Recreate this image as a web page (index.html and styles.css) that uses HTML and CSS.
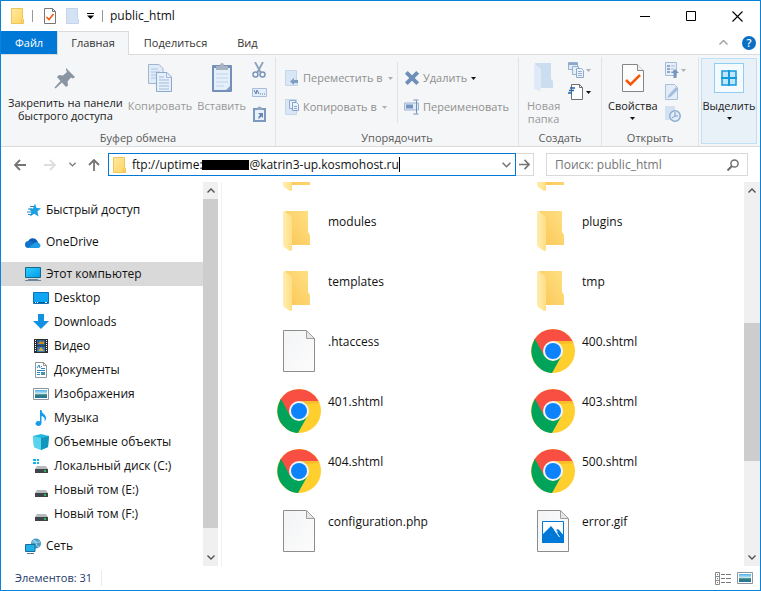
FILE: index.html
```html
<!DOCTYPE html>
<html lang="ru">
<head>
<meta charset="utf-8">
<title>public_html</title>
<link rel="stylesheet" href="styles.css">
</head>
<body>
<svg class="sprite" aria-hidden="true">
  <defs>
    <linearGradient id="gFront" x1="0" y1="0" x2="1" y2="0"><stop offset="0" stop-color="#ffedae"/><stop offset="1" stop-color="#ffdf86"/></linearGradient>
    <linearGradient id="gBack" x1="0" y1="1" x2="1" y2="0"><stop offset="0" stop-color="#fbc657"/><stop offset="1" stop-color="#ffe083"/></linearGradient>
    <linearGradient id="gSmall" x1="0" y1="0" x2="1" y2="1"><stop offset="0" stop-color="#ffe9a3"/><stop offset="1" stop-color="#ffd35f"/></linearGradient>
    <linearGradient id="gScreen" x1="0" y1="0" x2="1" y2="1"><stop offset="0" stop-color="#2fd0ff"/><stop offset="1" stop-color="#009bea"/></linearGradient>
    <linearGradient id="gPage" x1="0" y1="0" x2="1" y2="1"><stop offset="0" stop-color="#f3f4f5"/><stop offset="1" stop-color="#fcfcfd"/></linearGradient>
    <linearGradient id="gPic" x1="0" y1="0" x2="0" y2="1"><stop offset="0" stop-color="#4fb0e8"/><stop offset=".45" stop-color="#c5e7f4"/><stop offset=".6" stop-color="#39806f"/><stop offset="1" stop-color="#2073ab"/></linearGradient>
  </defs>
  <symbol id="folder" viewBox="0 0 28 40"><path d="M2 0h23v21l2 3v10H6z" fill="url(#gBack)"/><path d="M0 0l7 4q2 1 2 4v31q0 1-2 1l-6-4q-1-1-1-3z" fill="url(#gFront)"/></symbol>
  <symbol id="folder-sm" viewBox="0 0 13 16"><path d="M.5.5h11v10l1 1v4H.5z" fill="url(#gSmall)" stroke="#efc556"/><path d="M10.500 15v-3.500l1-1" fill="none" stroke="#efc556"/></symbol>
  <symbol id="page" viewBox="0 0 32 42"><path d="M.5.5H23L31.500 9v32.500H.5z" fill="url(#gPage)" stroke="#8d8d8d"/><path d="M23.500.5v8h8z" fill="#e6e6e6" stroke="#a0a0a0"/></symbol>
  <symbol id="gif" viewBox="0 0 32 42"><path d="M.5.5H23L31.500 9v32.500H.5z" fill="url(#gPage)" stroke="#8d8d8d"/><path d="M23.500.5v8h8z" fill="#e6e6e6" stroke="#a0a0a0"/><path d="M5.500 11.500h21v21h-21z" fill="#fff" stroke="#0078d7"/><path d="M5 33v-8l9-9 6 7 2-3 5 6v7z" fill="#0078d7"/><path d="M19 20l2-1 5 6v2z" fill="#0078d7"/><path d="M17.500 20l5 7" stroke="#fff"/></symbol>
  <symbol id="chrome" viewBox="0 0 44 44"><circle cx="22" cy="22" r="22" fill="#ffcf2e"/><path d="M3 11A22 22 0 0 1 41.500 12H22L13.300 27z" fill="#f94f43"/><path d="M4 10A22 22 0 0 0 21 44l9.500-17L22 32l-8.700-5z" fill="#00a35a"/><path d="M22 12h19.500l.8 2-14 1z" fill="#f0a922" opacity=".5"/><circle cx="22" cy="22" r="10" fill="#f2f4f6"/><circle cx="22" cy="22" r="8" fill="#0c82fb"/></symbol>
  <symbol id="tick-page" viewBox="0 0 22 28"><path d="M.5.500H15L21.500 7v20.500H.5z" fill="#fcfcfc" stroke="#858585"/><path d="M15.500.5v6h6" fill="#eee" stroke="#858585"/><path d="M4 16l4.500 4.500L18 11" fill="none" stroke="#f4590c" stroke-width="2.500"/></symbol>
  <symbol id="tick-sm" viewBox="0 0 12 16"><path d="M.5.5h8l3 3v12H.5z" fill="#fff" stroke="#777"/><path d="M8.500.5v3h3" fill="none" stroke="#777"/><path d="M2.500 9l2.500 2.500L9.500 6" fill="none" stroke="#f4590c" stroke-width="1.600"/></symbol>
  <symbol id="ghost-sm" viewBox="0 0 13 16"><path d="M.5.5h11v10l1 1v4H.5z" fill="#d4e2f3" stroke="#c3d5ea"/></symbol>
  <symbol id="arr" viewBox="0 0 5 3"><path d="M0 0h5L2.500 3z" fill="currentColor"/></symbol>
  <symbol id="pin" viewBox="0 0 22 22"><path d="M12 1l9 9-2 1.500-2-1-3.500 4 .5 4-2 1.500-4-4.500-6.500 6L.500 20.500l6-6.500L3 10l2-2 4 .5L13 5l-1-2z" fill="#8995a1"/></symbol>
  <symbol id="copy" viewBox="0 0 24 28"><path d="M.5.500H11l4 4v15H.500z" fill="#e1ecf9" stroke="#9eb4d3"/><path d="M3 5h7M3 8h9M3 11h6M3 14h6" stroke="#b0c4e0"/><path d="M8.500 8.500H19l4.500 4.500v14.500h-15z" fill="#e6f0fb" stroke="#8da8cd"/><path d="M18.500 8.500v5h5M11 16h10M11 19h10M11 22h10M11 25h10M11 13h5" stroke="#a3bbda" fill="none"/></symbol>
  <symbol id="paste" viewBox="0 0 20 29"><rect y="2" width="20" height="27" rx="1" fill="#7390b8"/><path d="M2 5h16v22H2z" fill="#e4effb"/><path d="M4 11h12M4 15h12M4 19h12M4 23h8" stroke="#c3d4e8"/><path d="M4 3h4q0-3 2-3t2 3h4v4H4z" fill="#a8b3c2"/><path d="M14 27l4-4v4z" fill="#88a3c7"/></symbol>
  <symbol id="cut" viewBox="0 0 14 16"><path d="M3 0l6 11M11 0L5 11" stroke="#8ba0bc" stroke-width="1.800"/><circle cx="3.500" cy="12.500" r="2.500" fill="none" stroke="#7795bd" stroke-width="1.500"/><circle cx="10.500" cy="12.500" r="2.500" fill="none" stroke="#7795bd" stroke-width="1.500"/></symbol>
  <symbol id="path" viewBox="0 0 15 9"><path d="M.5.5h14v8H.5z" fill="#e5effb" stroke="#a8bdd9"/><path d="M2 2l2 4 1-4 2 4" stroke="#5f7fa9" fill="none"/><path d="M8 6h1m1 0h1m1 0h1" stroke="#5f7fa9"/></symbol>
  <symbol id="shortcut" viewBox="0 0 13 16"><path d="M1 3h11v12H1z" fill="#e7f0fb" stroke="#7d98bf" stroke-width="2"/><path d="M4 2q2.500-3 5 0v2H4z" fill="#96a6bc"/><path d="M5 7h5v5L8.500 10.500 5.500 13Q4.500 11 7 9z" fill="#6685b2"/></symbol>
  <symbol id="move" viewBox="0 0 14 16"><path d="M.5.5h11v10h1v5H.500z" fill="#d8e6f6" stroke="#c6d6e9"/><path d="M5 11.500l4-3.500v2h4v3H9v2z" fill="#7f9cc3"/></symbol>
  <symbol id="copyto" viewBox="0 0 14 16"><path d="M.5.5h11v15H.500z" fill="#d8e6f6" stroke="#c6d6e9"/><path d="M4.500 1.500h6v8h-6z" fill="#e9f2fc" stroke="#92acce"/><path d="M7.500 3.500h4l2 2v6h-6z" fill="#edf4fc" stroke="#86a2c8"/><path d="M9 7.500h3M9 9.500h3" stroke="#86a2c8"/></symbol>
  <symbol id="delete" viewBox="0 0 14 14"><path d="M2 2l10 10M12 2L2 12" stroke="#6f8fb9" stroke-width="3.400"/></symbol>
  <symbol id="rename" viewBox="0 0 16 15"><path d="M.5 3.500h14v7H.5z" fill="#dfebf9" stroke="#9db4d3"/><path d="M2 5h7v4H2z" fill="#7493bd"/><path d="M9.500.5h5m-5 14h5M12.500 1v13" stroke="#7290b9" fill="none"/></symbol>
  <symbol id="newfolder" viewBox="0 0 20 29"><path d="M1 0h16v16l2 2v7H4z" fill="#ccddef"/><path d="M0 1l5 3q2 1 2 3v20l-1 1-6-2z" fill="#deeaf7"/></symbol>
  <symbol id="newitem" viewBox="0 0 16 16"><path d="M.5.500h9v7h-9z" fill="#e0ecf8" stroke="#98b0cf"/><path d="M.5 2h9" stroke="#8da7ca" stroke-width="2"/><path d="M4.500 4.500h6v8h-6z" fill="#e4effb" stroke="#98b0cf"/><path d="M8.500 6.500h5l2 2v7h-7z" fill="#ebf3fc" stroke="#8fa9cb"/><path d="M10 9.500h4M10 11.500h4M10 13.500h4" stroke="#98b0cf"/></symbol>
  <symbol id="easy" viewBox="0 0 16 16"><path d="M3.500.5h8l3 3v12h-11z" fill="#fff" stroke="#707070"/><path d="M11.500.500v3h3" fill="none" stroke="#707070"/><path d="M2 4h5M1 6.500h5M0 9h4" stroke="#2362b0" stroke-width="1.300"/></symbol>
  <symbol id="open" viewBox="0 0 14 16"><path d="M.5.500h11v13H.500z" fill="#e7f0fa" stroke="#a7bbd6"/><path d="M2 3h3v2H2zm0 3h3v2H2zm0 3h3v2H2z" fill="#91aacb"/><path d="M6 4h4M6 7h3M6 10h1" stroke="#a7bbd6"/><path d="M10 7l4 4h-2.500v5h-3v-5H6z" fill="#7896bf"/></symbol>
  <symbol id="edit" viewBox="0 0 14 16"><path d="M.5.500h9l3 3v12H.5z" fill="#e2edf9" stroke="#a9bfdb"/><path d="M2.500 14l1-3L11 3l2.500 2L6 12.500z" fill="#a4bddb"/></symbol>
  <symbol id="history" viewBox="0 0 16 16"><path d="M0 0h10v14H0z" fill="#d3e1f2"/><circle cx="10" cy="10" r="5.200" fill="#e4eefa" stroke="#8fabd0" stroke-width="1.500"/><path d="M10 6v4L7 12m3-2h3" stroke="#7b9ac4" fill="none"/></symbol>
  <symbol id="tiles" viewBox="0 0 16 16"><path d="M1 1h14v14H1z" fill="#c0e6fb" stroke="#129add" stroke-width="1.500"/><path d="M8 0v16M0 8h16" stroke="#129add" stroke-width="2"/></symbol>
  <symbol id="left" viewBox="0 0 12 12"><path d="M12 6H1.500M6 1L1 6l5 5" fill="none" stroke="currentColor" stroke-width="1.800"/></symbol>
  <symbol id="chev" viewBox="0 0 8 5"><path d="M.5.500L4 4 7.500.5" fill="none" stroke="currentColor" stroke-width="1.400"/></symbol>
  <symbol id="search" viewBox="0 0 12 12"><circle cx="7.500" cy="4.500" r="3.600" fill="none" stroke="#6e6e6e" stroke-width="1.500"/><path d="M5 7L.5 11.500" stroke="#6e6e6e" stroke-width="2"/></symbol>
  <symbol id="star" viewBox="0 0 16 16"><path d="M10 1.500l1.500 4.500 4.500.2-3.600 3.200 1.200 5.100-4.400-2.700-4.200 2.700 1.500-4.800-2.500-3 4-.2z" fill="#1b9ee2"/><path d="M5 4.500h4M3 7h4M2 10h5M3 12.500h3" stroke="#2a8cc4"/></symbol>
  <symbol id="cloud" viewBox="0 0 16 16"><path d="M3 8a5 5 0 0 1 9-1.500L14 10 3 11z" fill="#0a5eb5"/><path d="M3.500 14a3.500 3.500 0 0 1 0-7c2-.3 3.500.8 5 2L13 14z" fill="#1272c8"/><path d="M3 14L10 8.500a3.300 3.300 0 0 1 3.700.8A2.400 2.400 0 0 1 13.500 14z" fill="#1f9be6"/></symbol>
  <symbol id="pc" viewBox="0 0 16 16"><path d="M.5 1.500h15v10H.5z" fill="url(#gScreen)" stroke="#16688d"/><path d="M0 14.500h16M3 13.500h10" stroke="#6d8597"/></symbol>
  <symbol id="desktop" viewBox="0 0 16 16"><path d="M.5 2.500h15v11H.500z" fill="#0fa5f5" stroke="#0873b8"/><path d="M1 12.500h14" stroke="#075b9c"/><path d="M2 12.500h1m1 0h1m7 0h2" stroke="#fff"/></symbol>
  <symbol id="down" viewBox="0 0 16 16"><path d="M5 0h6v7h5l-8 8-8-8h5z" fill="#1191e2"/></symbol>
  <symbol id="video" viewBox="0 0 16 16"><path d="M1 1h14v14H1z" fill="#2d2d2d"/><path d="M2.500 2v12M13.500 2v12" stroke="#fff" stroke-dasharray="1 1"/><path d="M4 2h8v5.500H4z" fill="#27629f"/><path d="M4 8.500h8V14H4z" fill="#3579b9"/><path d="M5 6l2-3 2 1 2-1v3z" fill="#c78d2c"/><path d="M5 13l3-4 3 4z" fill="#d5ac41"/></symbol>
  <symbol id="docs" viewBox="0 0 16 16"><path d="M2.500.5h8l3 3v12h-11z" fill="#fff" stroke="#8c969b"/><path d="M10.500.5v3h3" fill="none" stroke="#8c969b"/><path d="M4 6l2-3 1 3M4 8.500h8M4 10.500h3M4 12.500h3M8 4.500h1M8 6.500h4" stroke="#2888bf" fill="none"/><path d="M8 10h4v3H8z" fill="#4a91a9"/></symbol>
  <symbol id="pics" viewBox="0 0 16 16"><path d="M.5 2.500h15v11H.5z" fill="#fff" stroke="#8c969b"/><path d="M2 4h12v8H2z" fill="url(#gPic)"/></symbol>
  <symbol id="music" viewBox="0 0 16 16"><path d="M7 0h1.500c0 4 5 4 4.500 9-.3 1-1 2-1.500 2 1-4-2-4.500-3-5v7c0 4-6 3.500-6 .5 0-2 2.500-3 4.500-2z" fill="#159beb"/></symbol>
  <symbol id="cube" viewBox="0 0 16 16"><path d="M0 2l8-2 8 2-1 11-7 3-7-3z" fill="#26b7dc"/><path d="M0 2l8 2v12l-7-3z" fill="#58d4ec"/><path d="M8 4l8-2-1 11-7 3z" fill="#1396bd"/></symbol>
  <symbol id="disk" viewBox="0 0 16 16"><path d="M4 8h9l2 3H2z" fill="#b7babb"/><path d="M2 11h13v4H2z" fill="#404448"/><path d="M11 13h2" stroke="#1bde62" stroke-width="1.500"/></symbol>
  <symbol id="disk-c" viewBox="0 0 16 16"><path d="M0 1h3v2H0zm4 0h2v2H4zM0 4h3v2H0zm4 0h2v2H4z" fill="#10b5ea"/><path d="M4 8h9l2 3H2z" fill="#b7babb"/><path d="M2 11h13v4H2z" fill="#404448"/><path d="M11 13h2" stroke="#1bde62" stroke-width="1.500"/></symbol>
  <symbol id="net" viewBox="0 0 16 16"><circle cx="11" cy="5.500" r="5" fill="#4b9cc5"/><path d="M8 2q3 0 3 3t3 4M7 4h8" stroke="#a8ddef" fill="none"/><path d="M.5 6.500h9.500v7H.500z" fill="#20b1e8" stroke="#176f9b"/><path d="M2 15.500h7" stroke="#5e7688"/></symbol>
  <symbol id="details" viewBox="0 0 16 13"><path d="M.5.500h4v12h-4zM0 4.500h5M0 8.500h5" stroke="#8a8a8a" fill="#fff"/><path d="M2 2.500h1M2 6.500h1" stroke="#3888c0"/><path d="M2 10.500h1" stroke="#d44"/><path d="M6 2.500h4m1 0h5M6 6.500h4m1 0h5M6 10.500h4m1 0h5" stroke="#777"/></symbol>
</svg>

<div class="window">
  <header class="titlebar">
    <svg class="i13"><use href="#folder-sm"/></svg>
    <span class="bar"></span>
    <button class="plain" aria-label="Свойства"><svg class="i12"><use href="#tick-sm"/></svg></button>
    <button class="plain" aria-label="Новая папка"><svg class="i13"><use href="#ghost-sm"/></svg></button>
    <button class="plain custom" aria-label="Настройка панели"><svg class="i7" viewBox="0 0 7 6"><path d="M0 .5h7" stroke="#000"/><path d="M0 2.500h7L3.500 6z"/></svg></button>
    <span class="bar"></span>
    <h1>public_html</h1>
    <div class="winctl">
      <button class="plain" aria-label="Свернуть"><svg viewBox="0 0 11 11"><path d="M0 5.500h10" stroke="#000"/></svg></button>
      <button class="plain" aria-label="Развернуть"><svg viewBox="0 0 11 11"><path d="M.5.500h9v9h-9z" fill="none" stroke="#000"/></svg></button>
      <button class="plain" aria-label="Закрыть"><svg viewBox="0 0 11 11"><path d="M.5.500l10 10M10.500.5l-10 10" stroke="#000" stroke-width="1.100"/></svg></button>
    </div>
  </header>

  <nav class="tabs">
    <button class="tab file">Файл</button>
    <button class="tab active">Главная</button>
    <button class="tab">Поделиться</button>
    <button class="tab">Вид</button>
    <div class="tabend">
      <button class="plain" aria-label="Свернуть ленту"><svg class="collapse" viewBox="0 0 9 5"><path d="M.5 4.500l4-4 4 4" fill="none" stroke="#a4a4a4" stroke-width="1.500"/></svg></button>
      <button class="help" aria-label="Справка">?</button>
    </div>
  </nav>

  <div class="ribbon">
    <section class="group clip">
      <div class="tools">
        <button class="big"><svg class="pin"><use href="#pin"/></svg><span>Закрепить на панели<br>быстрого доступа</span></button>
        <button class="big off"><svg class="i24"><use href="#copy"/></svg><span>Копировать</span></button>
        <button class="big off"><svg class="i20"><use href="#paste"/></svg><span>Вставить</span></button>
        <div class="stack">
          <button class="plain" aria-label="Вырезать"><svg class="i14"><use href="#cut"/></svg></button>
          <button class="plain" aria-label="Скопировать путь"><svg class="i15"><use href="#path"/></svg></button>
          <button class="plain" aria-label="Вставить ярлык"><svg class="i13"><use href="#shortcut"/></svg></button>
        </div>
      </div>
      <h2>Буфер обмена</h2>
    </section>
    <section class="group arrange">
      <div class="tools">
        <div class="pair">
          <button class="line"><svg class="i14"><use href="#move"/></svg>Переместить в<svg class="arr dim"><use href="#arr"/></svg></button>
          <button class="line"><svg class="i14"><use href="#copyto"/></svg>Копировать в<svg class="arr dim"><use href="#arr"/></svg></button>
        </div>
        <div class="pair second">
          <button class="line"><svg class="i16"><use href="#delete"/></svg>Удалить<svg class="arr"><use href="#arr"/></svg></button>
          <button class="line"><svg class="i16"><use href="#rename"/></svg>Переименовать</button>
        </div>
      </div>
      <h2>Упорядочить</h2>
    </section>
    <section class="group create">
      <div class="tools">
        <button class="big off"><svg class="i20"><use href="#newfolder"/></svg><span>Новая<br>папка</span></button>
        <div class="stack">
          <button class="plain" aria-label="Создать элемент"><svg class="i16"><use href="#newitem"/></svg><svg class="arr dim"><use href="#arr"/></svg></button>
          <button class="plain" aria-label="Простой доступ"><svg class="i16"><use href="#easy"/></svg><svg class="arr"><use href="#arr"/></svg></button>
        </div>
      </div>
      <h2>Создать</h2>
    </section>
    <section class="group opening">
      <div class="tools">
        <button class="big"><svg class="i22"><use href="#tick-page"/></svg><span>Свойства</span><svg class="arr"><use href="#arr"/></svg></button>
        <div class="stack">
          <button class="plain" aria-label="Открыть"><svg class="i14"><use href="#open"/></svg><svg class="arr dim"><use href="#arr"/></svg></button>
          <button class="plain" aria-label="Изменить"><svg class="i14"><use href="#edit"/></svg></button>
          <button class="plain" aria-label="Журнал"><svg class="i16"><use href="#history"/></svg></button>
        </div>
      </div>
      <h2>Открыть</h2>
    </section>
    <section class="group select">
      <button class="big chosen"><span class="frame"><svg class="i16"><use href="#tiles"/></svg></span><span>Выделить</span><svg class="arr"><use href="#arr"/></svg></button>
    </section>
  </div>

  <div class="location">
    <button class="plain back" aria-label="Назад"><svg><use href="#left"/></svg></button>
    <button class="plain fwd" aria-label="Вперед"><svg><use href="#left"/></svg></button>
    <button class="plain recent" aria-label="Последние расположения"><svg><use href="#chev"/></svg></button>
    <button class="plain up" aria-label="Вверх"><svg><use href="#left"/></svg></button>
    <div class="address">
      <svg class="i13"><use href="#folder-sm"/></svg>
      <div class="field">
        <input type="text" aria-label="Адрес" value="ftp://uptime:               @katrin3-up.kosmohost.ru">
        <span class="mask"></span><span class="caret"></span>
      </div>
      <button class="plain" aria-label="Список адресов"><svg class="drop"><use href="#chev"/></svg></button>
    </div>
    <button class="go" aria-label="Перейти"><svg><use href="#left"/></svg></button>
    <div class="search">
      <input type="search" aria-label="Поиск" placeholder="Поиск: public_html">
      <svg class="i12s"><use href="#search"/></svg>
    </div>
  </div>

  <main class="body">
    <nav class="tree">
      <ul>
        <li class="root"><a href="#"><svg><use href="#star"/></svg>Быстрый доступ</a></li>
        <li class="root"><a href="#"><svg><use href="#cloud"/></svg>OneDrive</a></li>
        <li class="root"><a href="#" class="current"><svg><use href="#pc"/></svg>Этот компьютер</a>
          <ul class="sub">
            <li><a href="#"><svg><use href="#desktop"/></svg>Desktop</a></li>
            <li><a href="#"><svg><use href="#down"/></svg>Downloads</a></li>
            <li><a href="#"><svg><use href="#video"/></svg>Видео</a></li>
            <li><a href="#"><svg><use href="#docs"/></svg>Документы</a></li>
            <li><a href="#"><svg><use href="#pics"/></svg>Изображения</a></li>
            <li><a href="#"><svg><use href="#music"/></svg>Музыка</a></li>
            <li><a href="#"><svg><use href="#cube"/></svg>Объемные объекты</a></li>
            <li><a href="#"><svg><use href="#disk-c"/></svg>Локальный диск (C:)</a></li>
            <li><a href="#"><svg><use href="#disk"/></svg>Новый том (E:)</a></li>
            <li><a href="#"><svg><use href="#disk"/></svg>Новый том (F:)</a></li>
          </ul>
        </li>
        <li class="root"><a href="#"><svg><use href="#net"/></svg>Сеть</a></li>
      </ul>
    </nav>
    <div class="scroll tree-scroll">
      <svg class="tip up"><use href="#chev"/></svg>
      <div class="track"><div class="thumb"></div></div>
      <svg class="tip"><use href="#chev"/></svg>
    </div>
    <div class="files">
      <div class="grid">
        <div class="item"><svg class="fold"><use href="#folder"/></svg></div>
        <div class="item"><svg class="fold"><use href="#folder"/></svg></div>
        <div class="item"><svg class="fold"><use href="#folder"/></svg><span>modules</span></div>
        <div class="item"><svg class="fold"><use href="#folder"/></svg><span>plugins</span></div>
        <div class="item"><svg class="fold"><use href="#folder"/></svg><span>templates</span></div>
        <div class="item"><svg class="fold"><use href="#folder"/></svg><span>tmp</span></div>
        <div class="item"><svg class="doc"><use href="#page"/></svg><span>.htaccess</span></div>
        <div class="item"><svg class="web"><use href="#chrome"/></svg><span>400.shtml</span></div>
        <div class="item"><svg class="web"><use href="#chrome"/></svg><span>401.shtml</span></div>
        <div class="item"><svg class="web"><use href="#chrome"/></svg><span>403.shtml</span></div>
        <div class="item"><svg class="web"><use href="#chrome"/></svg><span>404.shtml</span></div>
        <div class="item"><svg class="web"><use href="#chrome"/></svg><span>500.shtml</span></div>
        <div class="item"><svg class="doc"><use href="#page"/></svg><span>configuration.php</span></div>
        <div class="item"><svg class="doc"><use href="#gif"/></svg><span>error.gif</span></div>
      </div>
    </div>
    <div class="scroll file-scroll">
      <svg class="tip up"><use href="#chev"/></svg>
      <div class="track"><div class="thumb"></div></div>
      <svg class="tip"><use href="#chev"/></svg>
    </div>
  </main>

  <footer class="status">
    <span class="count">Элементов: 31</span>
    <button class="plain" aria-label="Таблица"><svg class="det"><use href="#details"/></svg></button>
    <button class="plain" aria-label="Крупные значки"><svg class="i16"><use href="#pics"/></svg></button>
  </footer>
</div>
</body>
</html>
```
FILE: styles.css
```css
* { box-sizing: border-box; }
body {
  margin: 0;
  font: 12px/16px "Open Sans", "Noto Sans", sans-serif;
  color: #111;
  background: #fff;
}
button, input { font: inherit; color: inherit; }
button { border: 0; background: none; padding: 0; margin: 0; }
svg { display: block; flex: none; }
h1, h2 { margin: 0; font-size: inherit; font-weight: 400; }
ul { list-style: none; margin: 0; padding: 0; }
.sprite { position: absolute; width: 0; height: 0; }
.plain { display: flex; align-items: center; gap: 2px; }

.i7 { width: 7px; height: 6px; }
.i12 { width: 12px; height: 16px; }
.i12s { width: 12px; height: 12px; }
.i13 { width: 13px; height: 16px; }
.i14 { width: 14px; height: 16px; }
.i15 { width: 15px; height: 9px; }
.i16 { width: 16px; height: 16px; }
.i20 { width: 20px; height: 29px; }
.i22 { width: 22px; height: 28px; }
.i24 { width: 24px; height: 28px; }
.pin { width: 22px; height: 22px; margin-top: 3px; }
.arr { width: 5px; height: 3px; color: #111; }
.dim { color: #adb0b3; }

.window {
  height: 100vh;
  display: flex;
  flex-direction: column;
  border: 1px solid #0883da;
  overflow: hidden;
}

.titlebar { display: flex; align-items: center; height: 30px; padding-left: 10px; flex: none; }
.titlebar .bar { width: 1px; height: 12px; background: #999; margin: 0 11px 0 8px; }
.titlebar .i12 { margin-right: 10px; }
.titlebar .custom { margin-left: 8px; }
.titlebar .custom + .bar { margin: 0 7px 0 8px; }
.winctl { display: flex; margin-left: auto; }
.winctl button { width: 46px; height: 30px; justify-content: center; }
.winctl svg { width: 11px; height: 11px; }

.tabs { display: flex; height: 24px; flex: none; border-bottom: 1px solid #dadbdc; font-size: 11px; }
.tab { height: 23px; padding: 0 14px; border: 1px solid transparent; border-bottom: 0; color: #333; white-space: nowrap; }
.tab.file { padding: 0 13px; background: #0078d7; color: #fff; }
.tab.active { height: 24px; padding: 0 13px 1px; background: #f5f6f7; border-color: #dadbdc; }
.tabend { display: flex; align-items: center; gap: 14px; margin-left: auto; padding-right: 4px; }
.collapse { width: 9px; height: 5px; }
.help { width: 14px; height: 14px; border-radius: 50%; background: #0a6fc5; color: #fff; font-size: 11px; line-height: 14px; font-weight: 600; }

.ribbon {
  display: grid;
  grid-template-columns: 275fr 243fr 83fr 97fr 61fr;
  height: 92px;
  flex: none;
  font-size: 11px;
  background: #f5f6f7;
  border-bottom: 1px solid #dadbdc;
}
.group { display: flex; flex-direction: column; justify-content: space-between; margin-top: 2px; padding: 5px 0 0 7px; border-right: 1px solid #e2e3e4; min-width: 0; }
.group h2 { text-align: center; color: #5a5a5a; margin-left: -7px; }
.tools { display: flex; }
.big { display: flex; flex-direction: column; align-items: center; align-self: flex-start; line-height: 13px; white-space: nowrap; color: #222; padding-top: 2px; }
.big > svg:first-child { margin-bottom: 7px; }
.big > .pin { margin-bottom: 10px; }
.big .i20 { margin-top: -1px; }
.big > .arr { margin-top: 5px; }
.big.off { color: #999; }
.clip .big + .big { margin-left: 5px; }
.stack { display: flex; flex-direction: column; align-items: center; gap: 6px; height: 60px; }
.clip .stack { margin-left: 6px; justify-content: space-between; gap: 0; }
.pair { display: flex; flex-direction: column; gap: 13px; padding: 8px 0; width: 112px; margin-left: 2px; }
.pair.second { width: auto; border-left: 1px solid #e0e1e2; padding-left: 6px; margin-left: 0; }
.line { display: flex; align-items: center; gap: 4px; height: 16px; color: #8f8f8f; white-space: nowrap; }
.line .arr { margin-left: 1px; }
.second .line { gap: 3px; }
.create .big { margin-left: 1px; }
.create .stack { margin-left: 8px; }
.opening .tools { margin-left: -1px; }
.opening .stack { align-items: flex-start; margin-left: 7px; }
.group.select { margin: 0; padding: 3px 3px 2px 2px; border: 0; }
.chosen { flex: 1; align-self: stretch; padding-top: 4px; background: #e8f1f8; border: 1px solid #bfe0f7; }
.frame { display: grid; place-items: center; width: 30px; height: 30px; margin-bottom: 6px; background: #f4fafe; border: 1px solid #8fcdf3; }

.location { display: flex; align-items: center; height: 35px; flex: none; padding: 0 12px 0 13px; color: #757575; }
.location .plain svg { width: 12px; height: 12px; }
.location .fwd { margin-left: 18px; color: #dedede; }
.fwd svg, .go svg { transform: scaleX(-1); }
.location .recent { margin-left: 13px; }
.location .recent svg { width: 7px; height: 5px; }
.location .up { margin-left: 12px; margin-right: 8px; }
.up svg { transform: rotate(90deg); }
.address { display: flex; align-items: center; flex: 402; height: 23px; padding-left: 4px; border: 1px solid #0078d7; min-width: 0; }
.field { position: relative; flex: 1; margin-left: 6px; color: #111; min-width: 0; }
.field input { display: block; width: 100%; height: 20px; border: 0; padding: 0; outline: 0; background: none; white-space: pre; }
.mask { position: absolute; left: 70px; top: 5px; width: 47px; height: 10px; background: #000; }
.caret { position: absolute; left: 267px; top: 2px; width: 1px; height: 15px; background: #000; }
.location .address .drop { width: 9px; height: 6px; margin-right: 4px; }
.go { display: grid; place-items: center; width: 18px; height: 23px; border: 1px solid #d9d9d9; border-left: 0; }
.go svg { width: 11px; height: 11px; }
.search { display: flex; align-items: center; flex: 184; height: 23px; margin-left: 12px; padding: 0 8px; border: 1px solid #d9d9d9; min-width: 0; }
.search input { flex: 1; min-width: 0; border: 0; padding: 0; outline: 0; background: none; }
.search input::placeholder { color: #757575; opacity: 1; }

.body { display: flex; flex: 1; min-height: 0; }
.tree { width: 202px; flex: none; padding-top: 16px; overflow: hidden; }
.root { margin-bottom: 8px; }
.tree a { display: flex; align-items: center; gap: 5px; height: 24px; padding-left: 24px; color: inherit; text-decoration: none; white-space: nowrap; }
.tree a svg { width: 16px; height: 16px; }
.tree .sub a { padding-left: 32px; }
.tree .current { background: #d9d9d9; }

.scroll { display: flex; flex-direction: column; width: 16px; flex: none; background: #f0f0f0; color: #505050; }
.tip { width: 8px; height: 5px; margin: 6px 4px; }
.tip.up { transform: rotate(180deg); }
.track { flex: 1; display: flex; flex-direction: column; }
.thumb { background: #cdcdcd; }
.tree-scroll { width: 15px; }
.tree-scroll .thumb { flex-basis: 94%; }
.file-scroll .track { padding-top: 124px; }
.file-scroll .thumb { height: 138px; }
.files { flex: 1; margin-left: 3px; padding-left: 14px; border-left: 1px solid #f0f0f0; display: flex; flex-direction: column; justify-content: flex-end; overflow: hidden; min-width: 0; }
.grid { display: grid; grid-template-columns: repeat(2, 1fr); grid-auto-rows: 60px; padding-bottom: 5px; }
.item { display: flex; align-items: center; padding-left: 41px; }
.item span { align-self: flex-start; margin-top: 13px; }
.fold { width: 28px; height: 40px; margin: 0 17px 0 6px; }
.doc { width: 32px; height: 42px; margin: 0 13px 0 6px; }
.web { width: 44px; height: 44px; margin-right: 7px; }

.status { display: flex; align-items: center; height: 24px; flex: none; padding: 0 7px 0 14px; font-size: 11px; color: #1e3969; }
.count { padding-right: 9px; margin-right: auto; border-right: 1px solid #ececec; }
.status button + button { margin-left: 6px; }
.det { width: 16px; height: 13px; }
```
